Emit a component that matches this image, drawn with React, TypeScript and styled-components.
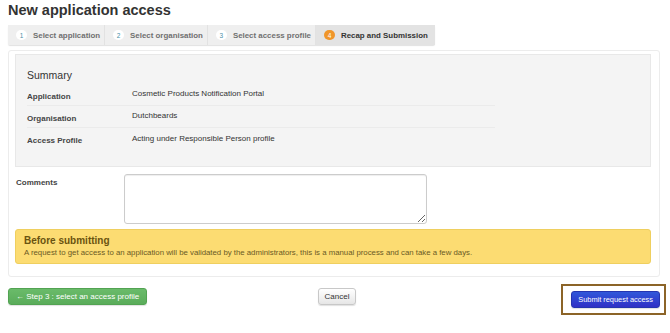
import styled, { createGlobalStyle } from "styled-components";

const GlobalStyle = createGlobalStyle`
  body {
    margin: 0;
    background: #ffffff;
    font-family: "Liberation Sans", Arial, Helvetica, sans-serif;
    color: #333333;
  }
`;

const Page = styled.div`
  width: 670px;
  padding: 0 4px 0 8px;
  box-sizing: border-box;
`;

const Title = styled.h1`
  margin: 0;
  font-size: 14.5px;
  font-weight: bold;
  line-height: 20px;
  color: #333333;
`;

const Tabs = styled.ul`
  display: flex;
  list-style: none;
  margin: 5px 0 0 0;
  padding: 0;
  width: fit-content;
  border-radius: 2px;
  box-shadow: 0 1px 1px rgba(0, 0, 0, 0.12);
`;

const Tab = styled.li<{ $active?: boolean }>`
  display: flex;
  align-items: center;
  gap: 6px;
  height: 20px;
  padding: 0 4px 0 8px;
  font-size: 7.9px;
  font-weight: bold;
  color: ${(p) => (p.$active ? "#333333" : "#707070")};
  background: ${(p) => (p.$active ? "#e3e3e3" : "#efefef")};
  border-right: 1px solid #e2e2e2;
  &:last-child {
    border-right: none;
    padding-right: 7px;
  }
`;

const Badge = styled.span<{ $active?: boolean }>`
  display: inline-flex;
  align-items: center;
  justify-content: center;
  width: 11px;
  height: 10px;
  border-radius: 5px;
  font-size: 6.5px;
  font-weight: normal;
  color: ${(p) => (p.$active ? "#ffffff" : "#4a8fa8")};
  background: ${(p) => (p.$active ? "#f0962a" : "#ffffff")};
`;

const Panel = styled.div`
  margin: 5px 6px 0 0;
  border: 1px solid #ececec;
  border-radius: 3px;
  padding: 3px 8px 12px 6px;
`;

const Summary = styled.div`
  background: #f4f4f4;
  border: 1px solid #e8e8e8;
  padding: 13px 11px 16px 11px;
`;

const SummaryTitle = styled.h2`
  margin: 0 0 2px 0;
  font-size: 10.5px;
  font-weight: normal;
  color: #333333;
  line-height: 14px;
`;

const Row = styled.div`
  display: grid;
  grid-template-columns: 105px 1fr;
  width: 468px;
  height: 22px;
  box-sizing: border-box;
  align-items: center;
  border-bottom: 1px solid #ebebeb;
  &:last-child {
    border-bottom: none;
  }
`;

const Label = styled.span`
  font-size: 8px;
  font-weight: bold;
  color: #444444;
  padding-top: 3px;
`;

const Value = styled.span`
  font-size: 8px;
  color: #333333;
  padding-bottom: 2px;
`;

const CommentRow = styled.div`
  display: grid;
  grid-template-columns: 109px 303px;
  margin-top: 7px;
`;

const CommentLabel = styled.label`
  font-size: 8px;
  font-weight: bold;
  color: #444444;
  padding-top: 4px;
  padding-left: 1px;
`;

const TextArea = styled.textarea`
  width: 303px;
  height: 50px;
  box-sizing: border-box;
  border: 1px solid #cccccc;
  border-radius: 3px;
  box-shadow: inset 0 1px 1px rgba(0, 0, 0, 0.07);
  resize: vertical;
  margin: 0;
  display: block;
`;

const Alert = styled.div`
  margin-top: 5px;
  background: #fcdc72;
  border: 1px solid #efcf5f;
  border-radius: 3px;
  padding: 5px 8px 5px 8px;
`;

const AlertTitle = styled.div`
  font-size: 10px;
  font-weight: bold;
  color: #6a5310;
  line-height: 12px;
`;

const AlertText = styled.div`
  font-size: 7.8px;
  color: #6a5a25;
  line-height: 11px;
`;

const Footer = styled.div`
  display: grid;
  grid-template-columns: 1fr auto 1fr;
  align-items: start;
  margin-top: 7px;
`;

const Cell = styled.div<{ $align: "start" | "center" | "end"; $offset?: number }>`
  display: flex;
  justify-content: ${(p) => (p.$align === "start" ? "flex-start" : p.$align === "end" ? "flex-end" : "center")};
  padding-top: ${(p) => p.$offset ?? 0}px;
`;

const Button = styled.button<{ $variant: "success" | "default" | "primary" }>`
  height: 17px;
  padding: 0 ${(p) => (p.$variant === "success" ? 7 : 6)}px;
  font-family: "Liberation Sans", Arial, sans-serif;
  font-size: ${(p) => (p.$variant === "primary" ? 7.4 : 8)}px;
  border-radius: 3px;
  cursor: pointer;
  color: ${(p) => (p.$variant === "default" ? "#333333" : "#ffffff")};
  border: 1px solid
    ${(p) =>
      p.$variant === "success"
        ? "#52a352"
        : p.$variant === "primary"
        ? "#2535b0"
        : "#c8c8c8"};
  background: ${(p) =>
    p.$variant === "success"
      ? "linear-gradient(#6abb6a, #5aac5a)"
      : p.$variant === "primary"
      ? "linear-gradient(#3058da, #3030c6)"
      : "linear-gradient(#ffffff, #e6e6e6)"};
  box-shadow: 0 1px 1px rgba(0, 0, 0, 0.12);
`;

const Highlight = styled.div`
  border: 2px solid #8c6428;
  padding: 2px 4px 5px 8px;
`;

const steps = [
  "Select application",
  "Select organisation",
  "Select access profile",
  "Recap and Submission",
];

const summary = [
  ["Application", "Cosmetic Products Notification Portal"],
  ["Organisation", "Dutchbeards"],
  ["Access Profile", "Acting under Responsible Person profile"],
];

export default function App() {
  return (
    <>
      <GlobalStyle />
      <Page>
        <Title>New application access</Title>
        <Tabs>
          {steps.map((s, i) => (
            <Tab key={s} $active={i === 3}>
              <Badge $active={i === 3}>{i + 1}</Badge>
              {s}
            </Tab>
          ))}
        </Tabs>
        <Panel>
          <Summary>
            <SummaryTitle>Summary</SummaryTitle>
            {summary.map(([l, v]) => (
              <Row key={l}>
                <Label>{l}</Label>
                <Value>{v}</Value>
              </Row>
            ))}
          </Summary>
          <CommentRow>
            <CommentLabel htmlFor="comments">Comments</CommentLabel>
            <TextArea id="comments" />
          </CommentRow>
          <Alert>
            <AlertTitle>Before submitting</AlertTitle>
            <AlertText>
              A request to get access to an application will be validated by
              the administrators, this is a manual process and can take a few
              days.
            </AlertText>
          </Alert>
        </Panel>
        <Footer>
          <Cell $align="start" $offset={4}>
            <Button $variant="success">← Step 3 : select an access profile</Button>
          </Cell>
          <Cell $align="center" $offset={4}>
            <Button $variant="default">Cancel</Button>
          </Cell>
          <Cell $align="end">
            <Highlight>
              <Button $variant="primary">Submit request access</Button>
            </Highlight>
          </Cell>
        </Footer>
      </Page>
    </>
  );
}
